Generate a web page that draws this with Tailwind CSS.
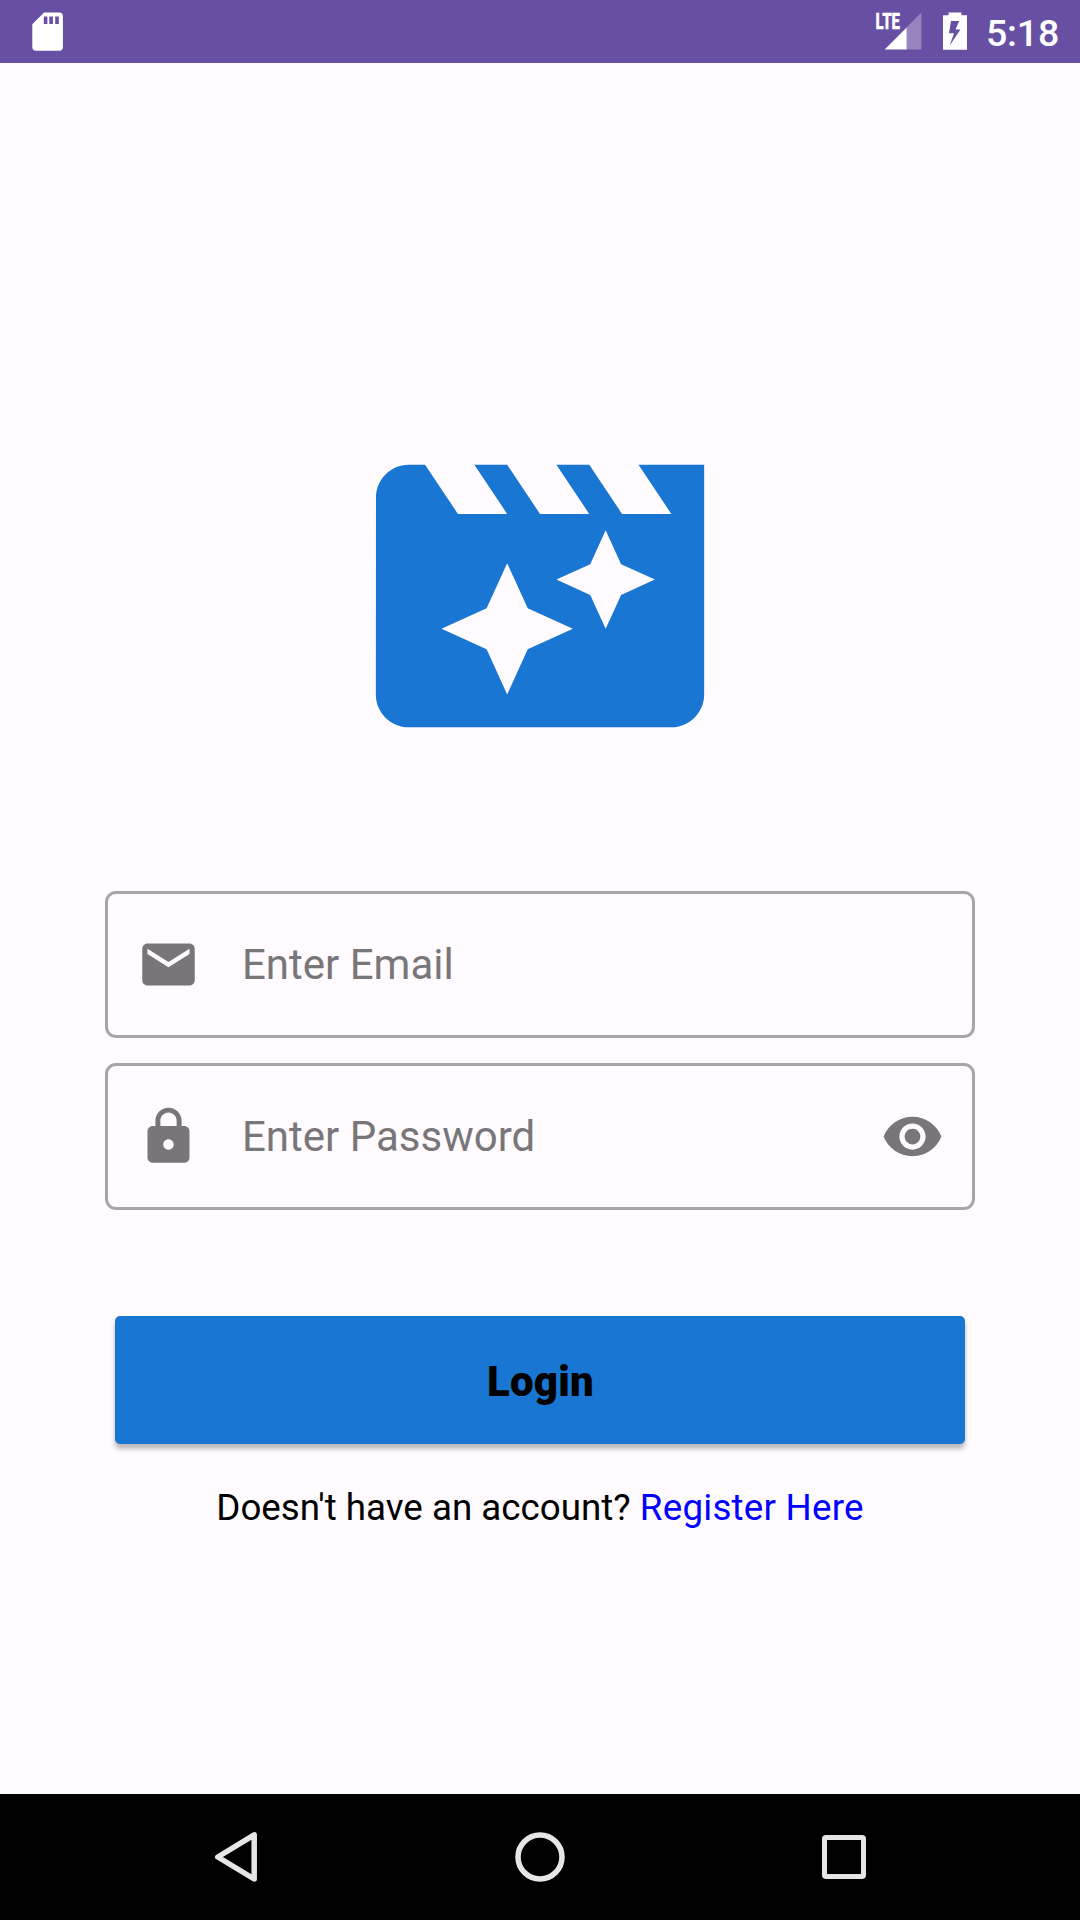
<!DOCTYPE html>
<html lang="en">
<head>
<meta charset="utf-8">
<title>Login</title>
<script src="https://cdn.jsdelivr.net/npm/@tailwindcss/browser@4"></script>
</head>
<body class="flex h-[1920px] w-[1080px] flex-col overflow-hidden bg-[#fffbff] font-[Roboto,sans-serif] text-black">
  <header class="flex h-[63px] shrink-0 items-center bg-[#6750a4] pl-8 text-white">
    <svg class="h-[63px] w-8" viewBox="0 0 32 63" fill="currentColor" fill-rule="evenodd"><path d="M12 12.5H27.2a3.7 3.7 0 0 1 3.7 3.7V47a3.7 3.7 0 0 1-3.7 3.7H4A3.7 3.7 0 0 1 .3 47V24.2zM11.800 16.500V24H15.400V16.500zM17.300 16.500V24H20.900V16.500zM23.200 16.500V24H26.800V16.500z"/></svg>
    <div class="ml-auto flex items-center">
      <svg class="h-[63px] w-[50px]" viewBox="874 0 50 63" fill="currentColor">
        <path d="M906.700 27.200 921.400 12.500V49.600H906.700z" opacity=".3"/>
        <path d="M884.700 49.600 906.700 27.400V49.600z"/>
        <text x="875.500" y="29" font-size="22.500" font-weight="900" textLength="24.500" lengthAdjust="spacingAndGlyphs" stroke="currentColor" stroke-width=".3">LTE</text>
      </svg>
      <svg class="ml-[19px] h-[63px] w-6" viewBox="943 0 24 63" fill="currentColor" fill-rule="evenodd"><path d="M948.600 12.400H961.400V15.200H967V49.700H943V15.200H948.600zM951 21 949 33.300H954L949.700 45.500 960.500 29.500H955.500L959.200 21z"/></svg>
      <span class="ml-[19px] w-[94px] pt-[3px] text-[37.500px] leading-[60px] font-medium tracking-[-0.200px]">5:18</span>
    </div>
  </header>

  <main class="flex grow flex-col items-center">
    <svg class="mt-[336px] size-[394px] shrink-0" viewBox="0 0 24 24" fill="#1976d2"><path d="M18 4l2 3h-3l-2-3h-2l2 3h-3l-2-3H8l2 3H7L5 4H4c-1.100 0-1.990.900-1.990 2L2 18c0 1.100.900 2 2 2h16c1.100 0 2-.900 2-2V4h-4zm-6.750 11.250L10 18l-1.250-2.750L6 14l2.750-1.250L10 10l1.250 2.750L14 14l-2.750 1.250zm5.690-3.310L16 14l-.940-2.060L13 11l2.060-.940L16 8l.940 2.060L19 11l-2.060.940z"/></svg>

    <form class="mt-[98px] flex w-[870px] flex-col gap-[25px] text-[42px] text-[#79767a]">
      <div class="flex h-[147px] items-center rounded-[11px] border-3 border-[#a6a5a7] px-[29px]">
        <svg class="size-[63px]" viewBox="0 0 24 24" fill="currentColor"><path d="M20 4H4c-1.100 0-1.990.900-1.990 2L2 18c0 1.100.900 2 2 2h16c1.100 0 2-.900 2-2V6c0-1.100-.900-2-2-2zm0 4l-8 5-8-5V6l8 5 8-5v2z"/></svg>
        <span class="ml-[42px] leading-none">Enter Email</span>
      </div>
      <div class="flex h-[147px] items-center rounded-[11px] border-3 border-[#a6a5a7] pr-7 pl-[29px]">
        <svg class="size-[63px]" viewBox="0 0 24 24" fill="currentColor"><path d="M18 8h-1V6c0-2.760-2.240-5-5-5S7 3.240 7 6v2H6c-1.100 0-2 .900-2 2v10c0 1.100.900 2 2 2h12c1.100 0 2-.900 2-2V10c0-1.100-.900-2-2-2zm-6 9c-1.100 0-2-.900-2-2s.900-2 2-2 2 .900 2 2-.900 2-2 2zm3.100-9H8.900V6c0-1.710 1.390-3.100 3.100-3.100 1.710 0 3.100 1.390 3.100 3.100v2z"/></svg>
        <span class="ml-[42px] leading-none">Enter Password</span>
        <svg class="ml-auto size-[63px]" viewBox="0 0 24 24" fill="currentColor"><path d="M12 4.500C7 4.500 2.730 7.610 1 12c1.730 4.390 6 7.500 11 7.500s9.270-3.110 11-7.500c-1.730-4.390-6-7.500-11-7.500zM12 17c-2.760 0-5-2.240-5-5s2.240-5 5-5 5 2.240 5 5-2.240 5-5 5zm0-8c-1.660 0-3 1.340-3 3s1.340 3 3 3 3-1.340 3-3-1.340-3-3-3z"/></svg>
      </div>
    </form>

    <button class="mt-[106px] h-32 w-[850px] rounded-[5px] bg-[#1976d2] pt-[2px] pl-px text-[42px] font-black tracking-[0.200px] shadow-[0_5px_5px_rgba(0,0,0,0.27)]">Login</button>
    <p class="mt-[39px] text-[36.750px] leading-[50px] whitespace-nowrap">Doesn't have an account? <a class="tracking-[0.220px] text-[#0000ff]">Register Here</a></p>
  </main>

  <nav class="flex h-[126px] shrink-0 items-center justify-between bg-black px-[204px]">
    <svg class="size-16" viewBox="204 1825 64 64" fill="none" stroke="#e6e6e6" stroke-width="5.500" stroke-linejoin="round"><path d="M254.200 1834.800V1879L217.800 1857z"/></svg>
    <svg class="size-16" viewBox="0 0 64 64" fill="none" stroke="#e6e6e6" stroke-width="5.500"><circle cx="32" cy="32" r="22"/></svg>
    <svg class="size-16" viewBox="812 1825 64 64" fill="none" stroke="#e6e6e6" stroke-width="5"><rect x="824.500" y="1837.500" width="39" height="39" rx="1.500"/></svg>
  </nav>
</body>
</html>
